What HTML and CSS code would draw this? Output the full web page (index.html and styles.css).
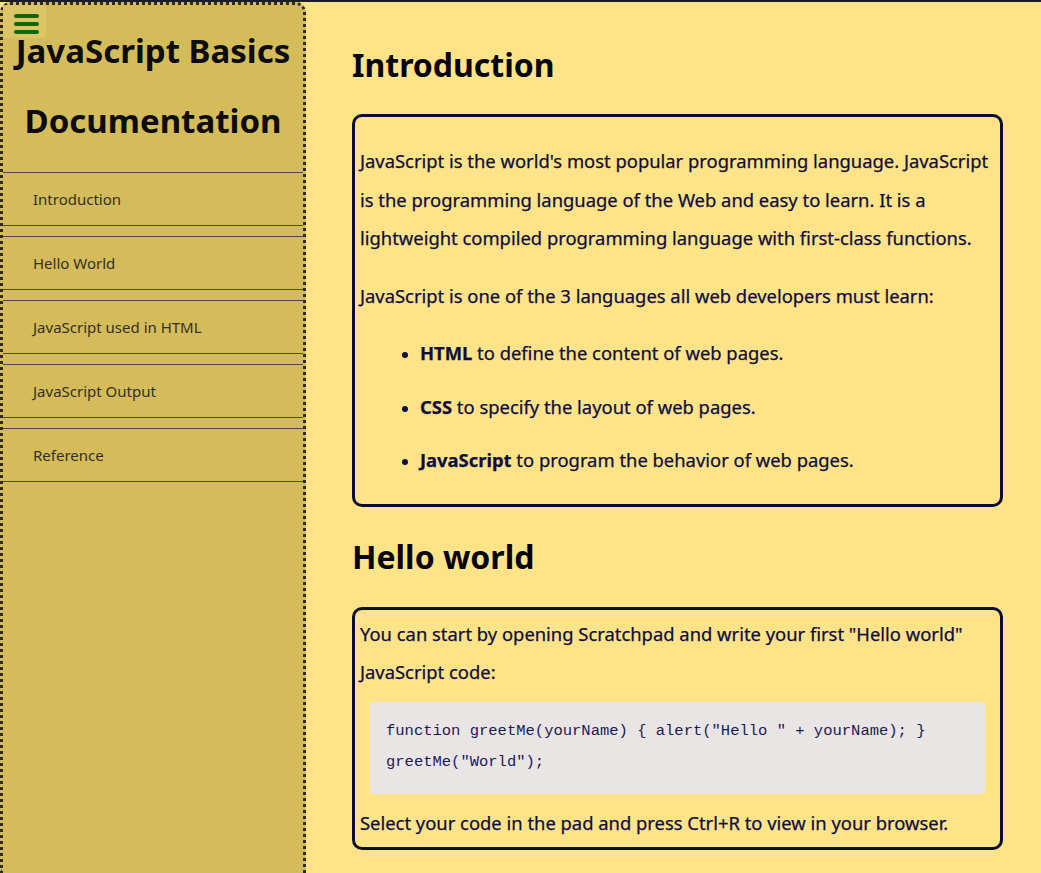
FILE: index.html
```html
<!DOCTYPE html>
<html lang="en">
<head>
<meta charset="utf-8">
<title>JavaScript Basics Documentation</title>
<link rel="stylesheet" href="styles.css">
</head>
<body>
<div class="page">
  <nav class="sidebar" id="navbar">
    <button class="menu-btn" aria-label="Menu">
      <span class="bar"></span><span class="bar"></span><span class="bar"></span>
    </button>
    <header class="side-title">JavaScript Basics Documentation</header>
    <ul class="nav-list">
      <li><a class="nav-link" href="#Introduction">Introduction</a></li>
      <li><a class="nav-link" href="#Hello_World">Hello World</a></li>
      <li><a class="nav-link" href="#JavaScript_used_in_HTML">JavaScript used in HTML</a></li>
      <li><a class="nav-link" href="#JavaScript_Output">JavaScript Output</a></li>
      <li><a class="nav-link" href="#Reference">Reference</a></li>
    </ul>
  </nav>
  <main class="main" id="main-doc">
    <section class="section" id="Introduction">
      <h2 class="sec-title">Introduction</h2>
      <div class="card card-intro">
        <p class="para">JavaScript is the world's most popular programming language. JavaScript is the programming language of the Web and easy to learn. It is a lightweight compiled programming language with first-class functions.</p>
        <p class="para">JavaScript is one of the 3 languages all web developers must learn:</p>
        <ul class="bullets">
          <li><strong>HTML</strong> to define the content of web pages.</li>
          <li><strong>CSS</strong> to specify the layout of web pages.</li>
          <li><strong>JavaScript</strong> to program the behavior of web pages.</li>
        </ul>
      </div>
    </section>
    <section class="section" id="Hello_World">
      <h2 class="sec-title">Hello world</h2>
      <div class="card card-hello">
        <p class="para tight">You can start by opening Scratchpad and write your first "Hello world" JavaScript code:</p>
        <div class="code-block"><code>function greetMe(yourName) { alert("Hello " + yourName); }<br>greetMe("World");</code></div>
        <p class="para tight">Select your code in the pad and press Ctrl+R to view in your browser.</p>
      </div>
    </section>
  </main>
</div>
</body>
</html>
```
FILE: styles.css
```css
html, body {
  margin: 0;
  padding: 0;
}
body {
  background: #ffe388;
  border-top: 2px solid #1c1b2b;
  font-family: "Noto Sans", "Open Sans", sans-serif;
  color: #0d0d3f;
  height: 871px;
  overflow: hidden;
}
.page {
  display: flex;
  align-items: stretch;
  height: 100%;
}
.sidebar {
  position: relative;
  flex: 0 0 306px;
  box-sizing: border-box;
  background: #d4bc5a;
  border: 3px dotted #2f2a1c;
  border-bottom: none;
  border-radius: 10px 10px 0 0;
}
.menu-btn {
  position: absolute;
  top: 0;
  left: 0;
  width: 43px;
  height: 33px;
  padding: 9px 0 0 11px;
  box-sizing: border-box;
  border: none;
  border-radius: 3px;
  background: #dcc567;
  display: flex;
  flex-direction: column;
  gap: 4px;
  cursor: pointer;
}
.bar {
  display: block;
  width: 25px;
  height: 4px;
  border-radius: 2px;
  background: #0b680b;
}
.side-title {
  margin: 11px 0 16px;
  font-size: 33px;
  font-weight: 700;
  line-height: 70px;
  text-align: center;
  color: #0c0c0c;
}
.nav-list {
  list-style: none;
  margin: 0;
  padding: 0;
}
.nav-list li {
  margin-bottom: 10px;
}
.nav-link {
  display: block;
  height: 52px;
  line-height: 52px;
  padding-left: 30px;
  border-top: 1px solid #4e4a38;
  border-bottom: 1px solid #4e4a38;
  font-size: 15px;
  color: #34301f;
  text-decoration: none;
}
.main {
  flex: 1 1 auto;
  padding: 13px 38px 0 46px;
  min-width: 0;
}
.sec-title {
  margin: 28px 0;
  font-size: 32px;
  font-weight: 700;
  line-height: 43px;
  color: #050510;
}
.card {
  border: 3px solid #0b0b33;
  border-radius: 10px;
  padding: 5px;
}
.para {
  margin: 19px 0;
  font-size: 18.4px;
  line-height: 38.5px;
  -webkit-text-stroke: 0.25px currentColor;
}
.card-intro .para:first-child {
  margin-top: 20px;
}
.para.tight {
  margin: 0;
}
.card-hello {
  margin-top: 29px;
}
.bullets {
  margin: 19px 0;
  padding-left: 60px;
  font-size: 18.4px;
  line-height: 38.5px;
  -webkit-text-stroke: 0.25px currentColor;
}
.bullets li {
  margin-bottom: 15px;
}
.bullets li::marker {
  font-size: 16px;
}
.bullets li:last-child {
  margin-bottom: 0;
}
.bullets strong {
  font-weight: 700;
}
.code-block {
  margin: 10px;
  padding: 14px 16px 16px;
  background: #e9e5e5;
  border-radius: 4px;
}
.code-block code {
  font-family: "Liberation Mono", "Courier New", monospace;
  font-size: 15.5px;
  line-height: 31px;
  color: #1a1a5a;
}
```
